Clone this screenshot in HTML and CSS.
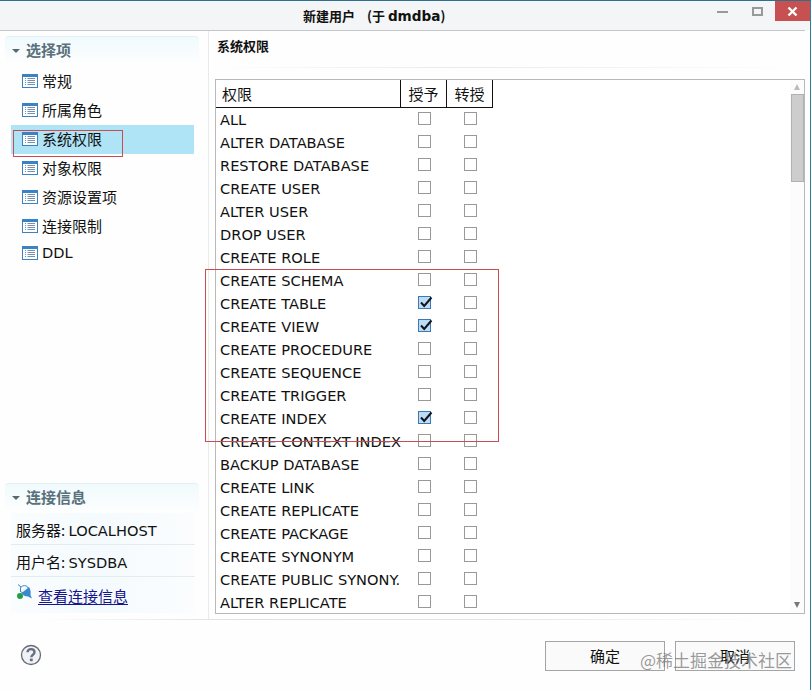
FILE: index.html
```html
<!DOCTYPE html>
<html lang="zh-CN">
<head>
    <meta charset="UTF-8">
    <meta name="viewport" content="width=device-width, initial-scale=1.0">
    <title>新建用户</title>
    <link rel="stylesheet" href="styles.css">
</head>
<body>
    <svg class="sprite" width="0" height="0">
        <symbol id="icon-list" viewBox="0 0 16 14">
            <rect width="16" height="14" fill="#3a82c4"/>
            <rect x="1" y="3" width="14" height="10" fill="#fff"/>
            <path d="M3 4.5h1M3 6.5h1M3 8.5h1M3 10.500h1M5.500 4.500h7.500M5.500 6.500h7.500M5.500 8.500h7.500M5.500 10.500h7.500" stroke="#7791ad"/>
        </symbol>
    </svg>
    <div class="window">
        <header class="titlebar">
            <h1>新建用户<span class="owner">(于 <b>dmdba</b>)</span></h1>
            <div class="controls">
                <svg class="control" width="35" height="20" viewBox="0 0 35 20"><path d="M12 11h11" stroke="#999" stroke-width="2"/></svg>
                <svg class="control" width="35" height="20" viewBox="0 0 35 20"><rect x="13" y="7" width="9" height="7" fill="none" stroke="#999" stroke-width="2"/></svg>
                <svg class="control close" width="35" height="20" viewBox="0 0 35 20"><path d="M13.5 6.5l8 8M21.5 6.5l-8 8" stroke="#fff" stroke-width="2.4"/></svg>
            </div>
        </header>
        <main class="content">
            <aside class="sidebar">
                <h2 class="group-title"><i class="arrow"></i>选择项</h2>
                <ul class="menu">
                    <li><svg class="icon"><use href="#icon-list"/></svg>常规</li>
                    <li><svg class="icon"><use href="#icon-list"/></svg>所属角色</li>
                    <li class="active"><svg class="icon"><use href="#icon-list"/></svg>系统权限<span class="mark mark-menu"></span></li>
                    <li><svg class="icon"><use href="#icon-list"/></svg>对象权限</li>
                    <li><svg class="icon"><use href="#icon-list"/></svg>资源设置项</li>
                    <li><svg class="icon"><use href="#icon-list"/></svg>连接限制</li>
                    <li class="latin"><svg class="icon"><use href="#icon-list"/></svg>DDL</li>
                </ul>
                <h2 class="group-title"><i class="arrow"></i>连接信息</h2>
                <div class="info">
                    <div class="info-row"><span class="label">服务器: </span>LOCALHOST</div>
                    <div class="info-row"><span class="label">用户名: </span>SYSDBA</div>
                    <div class="info-row link-row">
                        <svg class="plug" width="18" height="18" viewBox="0 0 18 18">
                            <path d="M2 1.500l3 2.500M4.500 9V5C5 3 8 2 10.500 3l2.500 3" fill="none" stroke="#3a86cc"/>
                            <path d="M5 9l8-5c1.500 2 2 5 1.500 8l1.500 3.500-4-2C9 13.500 6 12 5 9z" fill="#3a8ad2"/>
                            <path d="M6 8.500l5-4" stroke="#edf6fd" stroke-width="2"/>
                            <circle cx="4" cy="13" r="3" fill="#23a047"/>
                        </svg>
                        <a href="#">查看连接信息</a>
                    </div>
                </div>
            </aside>
            <section class="panel">
                <h2 class="panel-title">系统权限</h2>
                <div class="grid">
                    <div class="table-wrap">
                        <table>
                            <thead>
                                <tr>
                                    <th class="name">权限</th>
                                    <th>授予</th>
                                    <th>转授</th>
                                </tr>
                            </thead>
                            <tbody id="privilegeList"></tbody>
                        </table>
                    </div>
                    <div class="scrollbar">
                        <i class="up"></i>
                        <div class="thumb"></div>
                        <i class="down"></i>
                    </div>
                    <span class="mark mark-grid"></span>
                </div>
            </section>
        </main>
        <footer class="footer">
            <svg class="help" width="22" height="22" viewBox="0 0 22 22">
                <circle cx="11" cy="11" r="9.500" fill="#f1f2f6" stroke="#666a72" stroke-width="1.300"/>
                <path d="M7.500 8.300c0-4.300 7-4.300 7 0 0 2.400-3.200 2.500-3.200 5" fill="none" stroke="#667080" stroke-width="2.400"/>
                <rect x="9.900" y="14.600" width="2.800" height="2.600" fill="#667080"/>
            </svg>
            <button class="ok">确定</button>
            <button>取消</button>
            <span class="watermark">@稀土掘金技术社区</span>
        </footer>
    </div>
    <script>
        const privileges = [
            "ALL", "ALTER DATABASE", "RESTORE DATABASE", "CREATE USER", "ALTER USER",
            "DROP USER", "CREATE ROLE", "CREATE SCHEMA", "CREATE TABLE", "CREATE VIEW",
            "CREATE PROCEDURE", "CREATE SEQUENCE", "CREATE TRIGGER", "CREATE INDEX",
            "CREATE CONTEXT INDEX", "BACKUP DATABASE", "CREATE LINK", "CREATE REPLICATE",
            "CREATE PACKAGE", "CREATE SYNONYM", "CREATE PUBLIC SYNONY.", "ALTER REPLICATE"
        ];
        const granted = ["CREATE TABLE", "CREATE VIEW", "CREATE INDEX"];
        const tick = '<svg width="15" height="13" viewBox="0 0 15 13"><path d="M3 6.500l3.200 3.500L13.500 1.500" fill="none" stroke="#10151c" stroke-width="2"/></svg>';

        document.getElementById("privilegeList").innerHTML = privileges.map(p => {
            const checked = granted.includes(p);
            return `<tr>
                <td class="name">${p}</td>
                <td><span class="box${checked ? " checked" : ""}">${checked ? tick : ""}</span></td>
                <td><span class="box"></span></td>
            </tr>`;
        }).join("");
    </script>
</body>
</html>
```
FILE: styles.css
```css
* {
    box-sizing: border-box;
}
body {
    margin: 0;
    background: #fff;
    color: #111;
    font-family: "DejaVu Sans", "Noto Sans CJK SC", sans-serif;
    font-size: 15px;
    overflow: hidden;
}
h1, h2, ul {
    margin: 0;
    padding: 0;
}
.sprite {
    display: block;
}
.window {
    display: flex;
    flex-direction: column;
    width: 811px;
    height: 690px;
    border-top: 1px solid #2d6f8e;
    border-right: 1px solid #2f8199;
    background: #fefefe;
}

/* title bar */
.titlebar {
    display: flex;
    justify-content: space-between;
    height: 30px;
    margin-right: 5px;
    padding-left: 303px;
    background: #f4f5f6;
    border-bottom: 1px solid #c3c7c9;
}
h1 {
    font: bold 13px/30px "Noto Sans CJK SC", sans-serif;
    white-space: nowrap;
}
.owner {
    margin-left: 12px;
}
.owner b {
    font-family: "DejaVu Sans", sans-serif;
    font-size: 13.6px;
}
.controls {
    display: flex;
    margin-right: -5px;
    background: #f4f5f6;
    height: 29px;
}
.control.close {
    background: #c75050;
}

.content {
    display: flex;
    height: 588px;
}

/* sidebar */
.sidebar {
    width: 209px;
    padding: 5px 9px 0 5px;
    border-right: 1px solid #e9eaea;
}
.group-title {
    display: flex;
    align-items: center;
    height: 30px;
    padding: 0 0 2px 7px;
    border-top: 1px solid #e3f1f5;
    border-radius: 4px;
    background: linear-gradient(#f0fafd, #fefefe);
    color: #58717c;
    font-size: 15px;
    font-weight: bold;
    line-height: 22px;
}
.arrow {
    width: 8px;
    margin-right: 6px;
    border: 4px solid transparent;
    border-top: 4px solid #5a686e;
    border-bottom: 0;
}
.menu {
    height: 417px;
    padding: 1px 0 0 6px;
    list-style: none;
}
.menu li {
    position: relative;
    display: flex;
    align-items: center;
    width: 183px;
    height: 29px;
    padding-left: 11px;
    line-height: 22px;
}
.menu .latin {
    height: 24px;
    font-size: 14.6px;
}
.menu .active {
    background: #afe3f6;
}
.icon {
    width: 16px;
    height: 14px;
    margin: 0 4px 2px 0;
}
.latin .icon {
    margin-bottom: 0;
}
.info {
    width: 184px;
    margin-left: 6px;
}
.info-row {
    height: 32px;
    padding-left: 5px;
    border-bottom: 1px solid #e3ecef;
    background: linear-gradient(90deg, #fafdfe, #f4fafd 50%, #fbfdfe);
    font-size: 14.6px;
    line-height: 34px;
    white-space: pre;
}
.label {
    font-family: "Noto Sans CJK SC", sans-serif;
    font-size: 15px;
}
.link-row {
    display: flex;
    height: 36px;
    border-bottom: 0;
}
.plug {
    margin: 6px 4px 0 0;
}
.link-row a {
    color: #15158c;
    font-size: 15px;
    line-height: 40px;
    text-underline-offset: 2px;
}

/* privileges table */
.panel {
    flex: 1;
    padding: 0 5px 0 6px;
}
.panel-title {
    height: 48px;
    padding-left: 2px;
    font-size: 13px;
    line-height: 32px;
    background: linear-gradient(90deg, #fefefe, #e9eaea 40%, #fefefe) 0 36px / 100% 1px no-repeat;
}
.grid {
    position: relative;
    display: flex;
    justify-content: space-between;
    height: 535px;
    border: 1px solid #b7b9b9;
    background: #fff;
}
.table-wrap {
    height: 533px;
    overflow: hidden;
}
table {
    width: 277px;
    table-layout: fixed;
    border-collapse: separate;
    border-spacing: 0;
}
th {
    width: 46px;
    height: 28px;
    padding: 2px 0 0;
    border-right: 1px solid #111;
    border-bottom: 1px solid #111;
    font-weight: normal;
    line-height: 22px;
}
th.name {
    width: 185px;
    padding-left: 6px;
    text-align: left;
}
td {
    height: 23px;
    padding: 2px 0 0;
    font-size: 14.6px;
    line-height: 21px;
    vertical-align: top;
}
td.name {
    padding: 1px 0 0 4px;
    white-space: nowrap;
}
.box {
    display: block;
    width: 13px;
    height: 13px;
    margin: 2px 0 0 17px;
    border: 1px solid #999;
    background: #fff;
}
.box.checked {
    border-color: #3c78b4;
    background: #bddcf5;
}
.box svg {
    display: block;
    margin: -1px;
}
.scrollbar {
    display: flex;
    flex-direction: column;
    align-items: center;
    width: 14px;
    padding-top: 4px;
    background: #fcfcfc;
}
.up {
    border: 3px solid transparent;
    border-top: 0;
    border-bottom: 6px solid #bbb;
}
.thumb {
    width: 13px;
    height: 88px;
    margin-top: 4px;
    border: 1px solid #b1b1b1;
    background: #cdcdcd;
}
.down {
    margin: auto 0 5px;
    border: 3px solid transparent;
    border-top: 6px solid #777;
    border-bottom: 0;
}

/* red marks over the content */
.mark {
    position: absolute;
    border: 1px solid #cb4b52;
}
.mark-menu {
    top: 5px;
    left: 2px;
    width: 110px;
    height: 27px;
}
.mark-grid {
    top: 189px;
    left: -11px;
    width: 294px;
    height: 173px;
}

.footer {
    position: relative;
    display: flex;
    align-items: flex-start;
    flex: 1;
    padding: 22px 15px 0 20px;
    background: linear-gradient(90deg, #fefefe 5%, #dedfdf 30%, #e2e3e3 60%, #fefefe 95%) 0 0 / 100% 1px no-repeat;
}
.help {
    margin-top: 3px;
}
button {
    width: 120px;
    height: 30px;
    padding: 2px 0 0;
    border: 1px solid #a5a5a5;
    background: #fafafa;
    color: #111;
    font: 15px/26px "DejaVu Sans", "Noto Sans CJK SC", sans-serif;
}
.ok {
    margin: 0 10px 0 auto;
}
.watermark {
    position: absolute;
    right: 18px;
    top: 28px;
    color: rgba(110, 110, 110, 0.7);
    font: 17px/25px "Noto Sans CJK SC", sans-serif;
    white-space: nowrap;
}
```
